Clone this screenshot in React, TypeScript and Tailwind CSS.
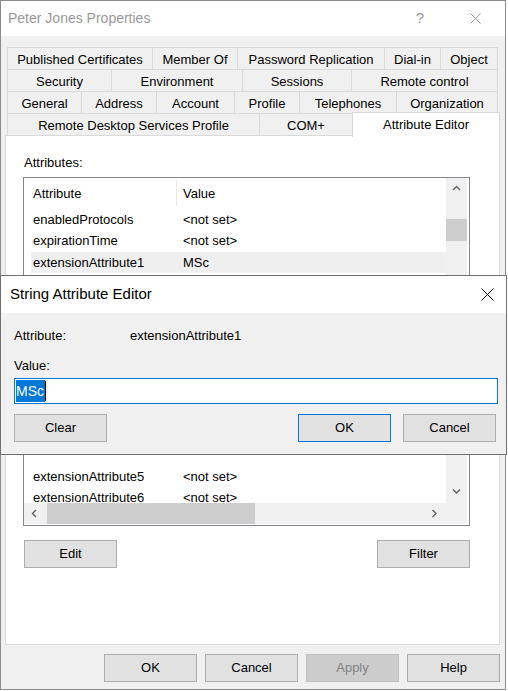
import React from "react";

type Tab = { label: string; width: number; selected?: boolean };

const tabRows: Tab[][] = [
  [
    { label: "Published Certificates", width: 146 },
    { label: "Member Of", width: 86 },
    { label: "Password Replication", width: 148 },
    { label: "Dial-in", width: 57 },
    { label: "Object", width: 58 },
  ],
  [
    { label: "Security", width: 105 },
    { label: "Environment", width: 132 },
    { label: "Sessions", width: 110 },
    { label: "Remote control", width: 147 },
  ],
  [
    { label: "General", width: 75 },
    { label: "Address", width: 76 },
    { label: "Account", width: 79 },
    { label: "Profile", width: 66 },
    { label: "Telephones", width: 98 },
    { label: "Organization", width: 102 },
  ],
  [
    { label: "Remote Desktop Services Profile", width: 253 },
    { label: "COM+", width: 94 },
    { label: "Attribute Editor", width: 148, selected: true },
  ],
];

// rows above the editor dialog, and rows visible below it
const topRows: [string, string][] = [
  ["enabledProtocols", "<not set>"],
  ["expirationTime", "<not set>"],
  ["extensionAttribute1", "MSc"],
];

const bottomRows: [string, string][] = [
  ["extensionAttribute5", "<not set>"],
  ["extensionAttribute6", "<not set>"],
];

const Chevron = ({ dir }: { dir: "up" | "down" | "left" | "right" }) => {
  const points = {
    up: "1,5 4.5,1.5 8,5",
    down: "1,1.5 4.5,5 8,1.5",
    left: "5,1 1.5,4.5 5,8",
    right: "1.5,1 5,4.5 1.5,8",
  }[dir];
  const horizontal = dir === "up" || dir === "down";
  return (
    <svg width={horizontal ? 9 : 7} height={horizontal ? 7 : 9} viewBox={horizontal ? "0 0 9 7" : "0 0 7 9"}>
      <polyline points={points} fill="none" stroke="#606060" strokeWidth="1.4" />
    </svg>
  );
};

const Button = ({ label, className = "" }: { label: string; className?: string }) => (
  <div
    className={`flex h-[28px] w-[93px] items-center justify-center border border-[#adadad] bg-[#e1e1e1] text-[13px] text-black ${className}`}
  >
    {label}
  </div>
);

const Row = ({ name, value }: { name: string; value: string }) => (
  <div className={`flex h-[21.4px] items-center ${name === "extensionAttribute1" ? "bg-[#efefef]" : ""}`}>
    <span className="w-[152px] pl-[2px]">{name}</span>
    <span>{value}</span>
  </div>
);

export default function App() {
  return (
    <div className="relative h-[691px] w-[508px] bg-white font-['Liberation_Sans',Arial,sans-serif] text-[13px] text-black">
      {/* main properties window */}
      <div className="flex h-[690px] w-[506px] flex-col border border-[#8c8c8c] bg-[#f0f0f0]">
        <div className="flex h-[35px] items-center bg-white pb-px pl-[7px]">
          <span className="text-[14px] text-[#999999]">Peter Jones Properties</span>
          <span className="ml-auto mr-[46px] text-[15px] text-[#999999]">?</span>
          <svg width="11" height="11" viewBox="0 0 11 11" className="mr-[24px]">
            <path d="M0.5 0.5 L10.5 10.5 M10.5 0.5 L0.5 10.5" stroke="#999999" strokeWidth="1" />
          </svg>
        </div>

        <div className="pl-[6px] pt-[11px]">
          {tabRows.map((row, i) => (
            <div key={i} className="-mt-px flex h-[23px] first:mt-0">
              {row.map((tab) =>
                tab.selected ? (
                  <div
                    key={tab.label}
                    className="relative z-10 -ml-px -mt-px flex h-[25px] items-center justify-center border border-b-0 border-[#d9d9d9] bg-white"
                    style={{ width: tab.width }}
                  >
                    {tab.label}
                  </div>
                ) : (
                  <div
                    key={tab.label}
                    className="-ml-px flex h-[23px] items-center justify-center border border-[#d9d9d9] pt-[2px] first:ml-0"
                    style={{ width: tab.width }}
                  >
                    {tab.label}
                  </div>
                )
              )}
            </div>
          ))}
        </div>

        <div className="-mt-px ml-[4px] flex h-[510px] w-[495px] flex-col border border-[#d9d9d9] bg-white pl-[17px] pt-[19px]">
          <div className="mb-[6px] ml-px leading-[16px]">Attributes:</div>
          <div className="flex h-[349px] w-[447px] flex-col border border-[#828790] pb-px pr-[2px]">
            <div className="flex min-h-0 flex-1">
              <div className="flex-1 overflow-hidden">
                <div className="relative flex h-[31px] items-center">
                  <span className="w-[152px] pl-[9px]">Attribute</span>
                  <span className="absolute left-[152px] top-[2px] h-[26px] w-px bg-[#e5e5e5]" />
                  <span className="pl-[7px]">Value</span>
                </div>
                <div className="pl-[7px]">
                  {topRows.map(([name, value]) => (
                    <Row key={name} name={name} value={value} />
                  ))}
                  {/* rows hidden behind the editor dialog */}
                  <div className="h-[192.6px]" />
                  {bottomRows.map(([name, value]) => (
                    <Row key={name} name={name} value={value} />
                  ))}
                </div>
              </div>
              <div className="flex w-[21px] flex-col bg-[#f0f0f0]">
                <div className="flex h-[20px] items-center justify-center">
                  <Chevron dir="up" />
                </div>
                <div className="mt-[21px] h-[22px] bg-[#cdcdcd]" />
                <div className="mt-auto flex h-[21px] items-center justify-center pb-[3px]">
                  <Chevron dir="down" />
                </div>
              </div>
            </div>
            <div className="flex h-[21px] bg-[#f0f0f0]">
              <div className="flex w-[21px] items-center justify-center">
                <Chevron dir="left" />
              </div>
              <div className="flex-1">
                <div className="ml-[2px] h-full w-[208px] bg-[#cdcdcd]" />
              </div>
              <div className="flex w-[21px] items-center justify-center pr-[3px]">
                <Chevron dir="right" />
              </div>
              <div className="w-[21px]" />
            </div>
          </div>
          <div className="mt-[14px] flex w-[447px] justify-between pl-px">
            <Button label="Edit" />
            <Button label="Filter" />
          </div>
        </div>

        <div className="mt-[9px] flex justify-end gap-[8px] pr-[5px]">
          <Button label="OK" />
          <Button label="Cancel" />
          <div className="flex h-[28px] w-[93px] items-center justify-center border border-[#bfbfbf] bg-[#cccccc] text-[#838383]">
            Apply
          </div>
          <Button label="Help" />
        </div>
      </div>

      {/* String Attribute Editor dialog on top */}
      <div className="absolute left-0 top-[275px] flex h-[180px] w-[507px] flex-col border border-[#707070] bg-[#f0f0f0]">
        <div className="flex h-[37px] items-center bg-white pl-[9px]">
          <span className="text-[15px]">String Attribute Editor</span>
          <svg width="13" height="13" viewBox="0 0 13 13" className="ml-auto mr-[12px]">
            <path d="M0.5 0.5 L12.5 12.5 M12.5 0.5 L0.5 12.5" stroke="#000000" strokeWidth="1" />
          </svg>
        </div>
        <div className="flex flex-col pl-[13px] pr-[10px] pt-[15px]">
          <div className="flex leading-[15px]">
            <span className="w-[116px]">Attribute:</span>
            <span>extensionAttribute1</span>
          </div>
          <div className="mt-[15px] leading-[15px]">Value:</div>
          <div className="mt-[5px] flex h-[26px] w-[484px] items-center border border-[#0078d7] bg-white pl-px">
            <span className="flex h-[22px] items-center bg-[#0078d7] pr-px text-[14px] text-white">MSc</span>
            <span className="h-[20px] w-px bg-black" />
          </div>
          <div className="mt-[10px] flex justify-between">
            <Button label="Clear" />
            <div className="flex gap-[12px]">
              <Button label="OK" className="!border-[#0078d7]" />
              <Button label="Cancel" />
            </div>
          </div>
        </div>
      </div>
    </div>
  );
}
